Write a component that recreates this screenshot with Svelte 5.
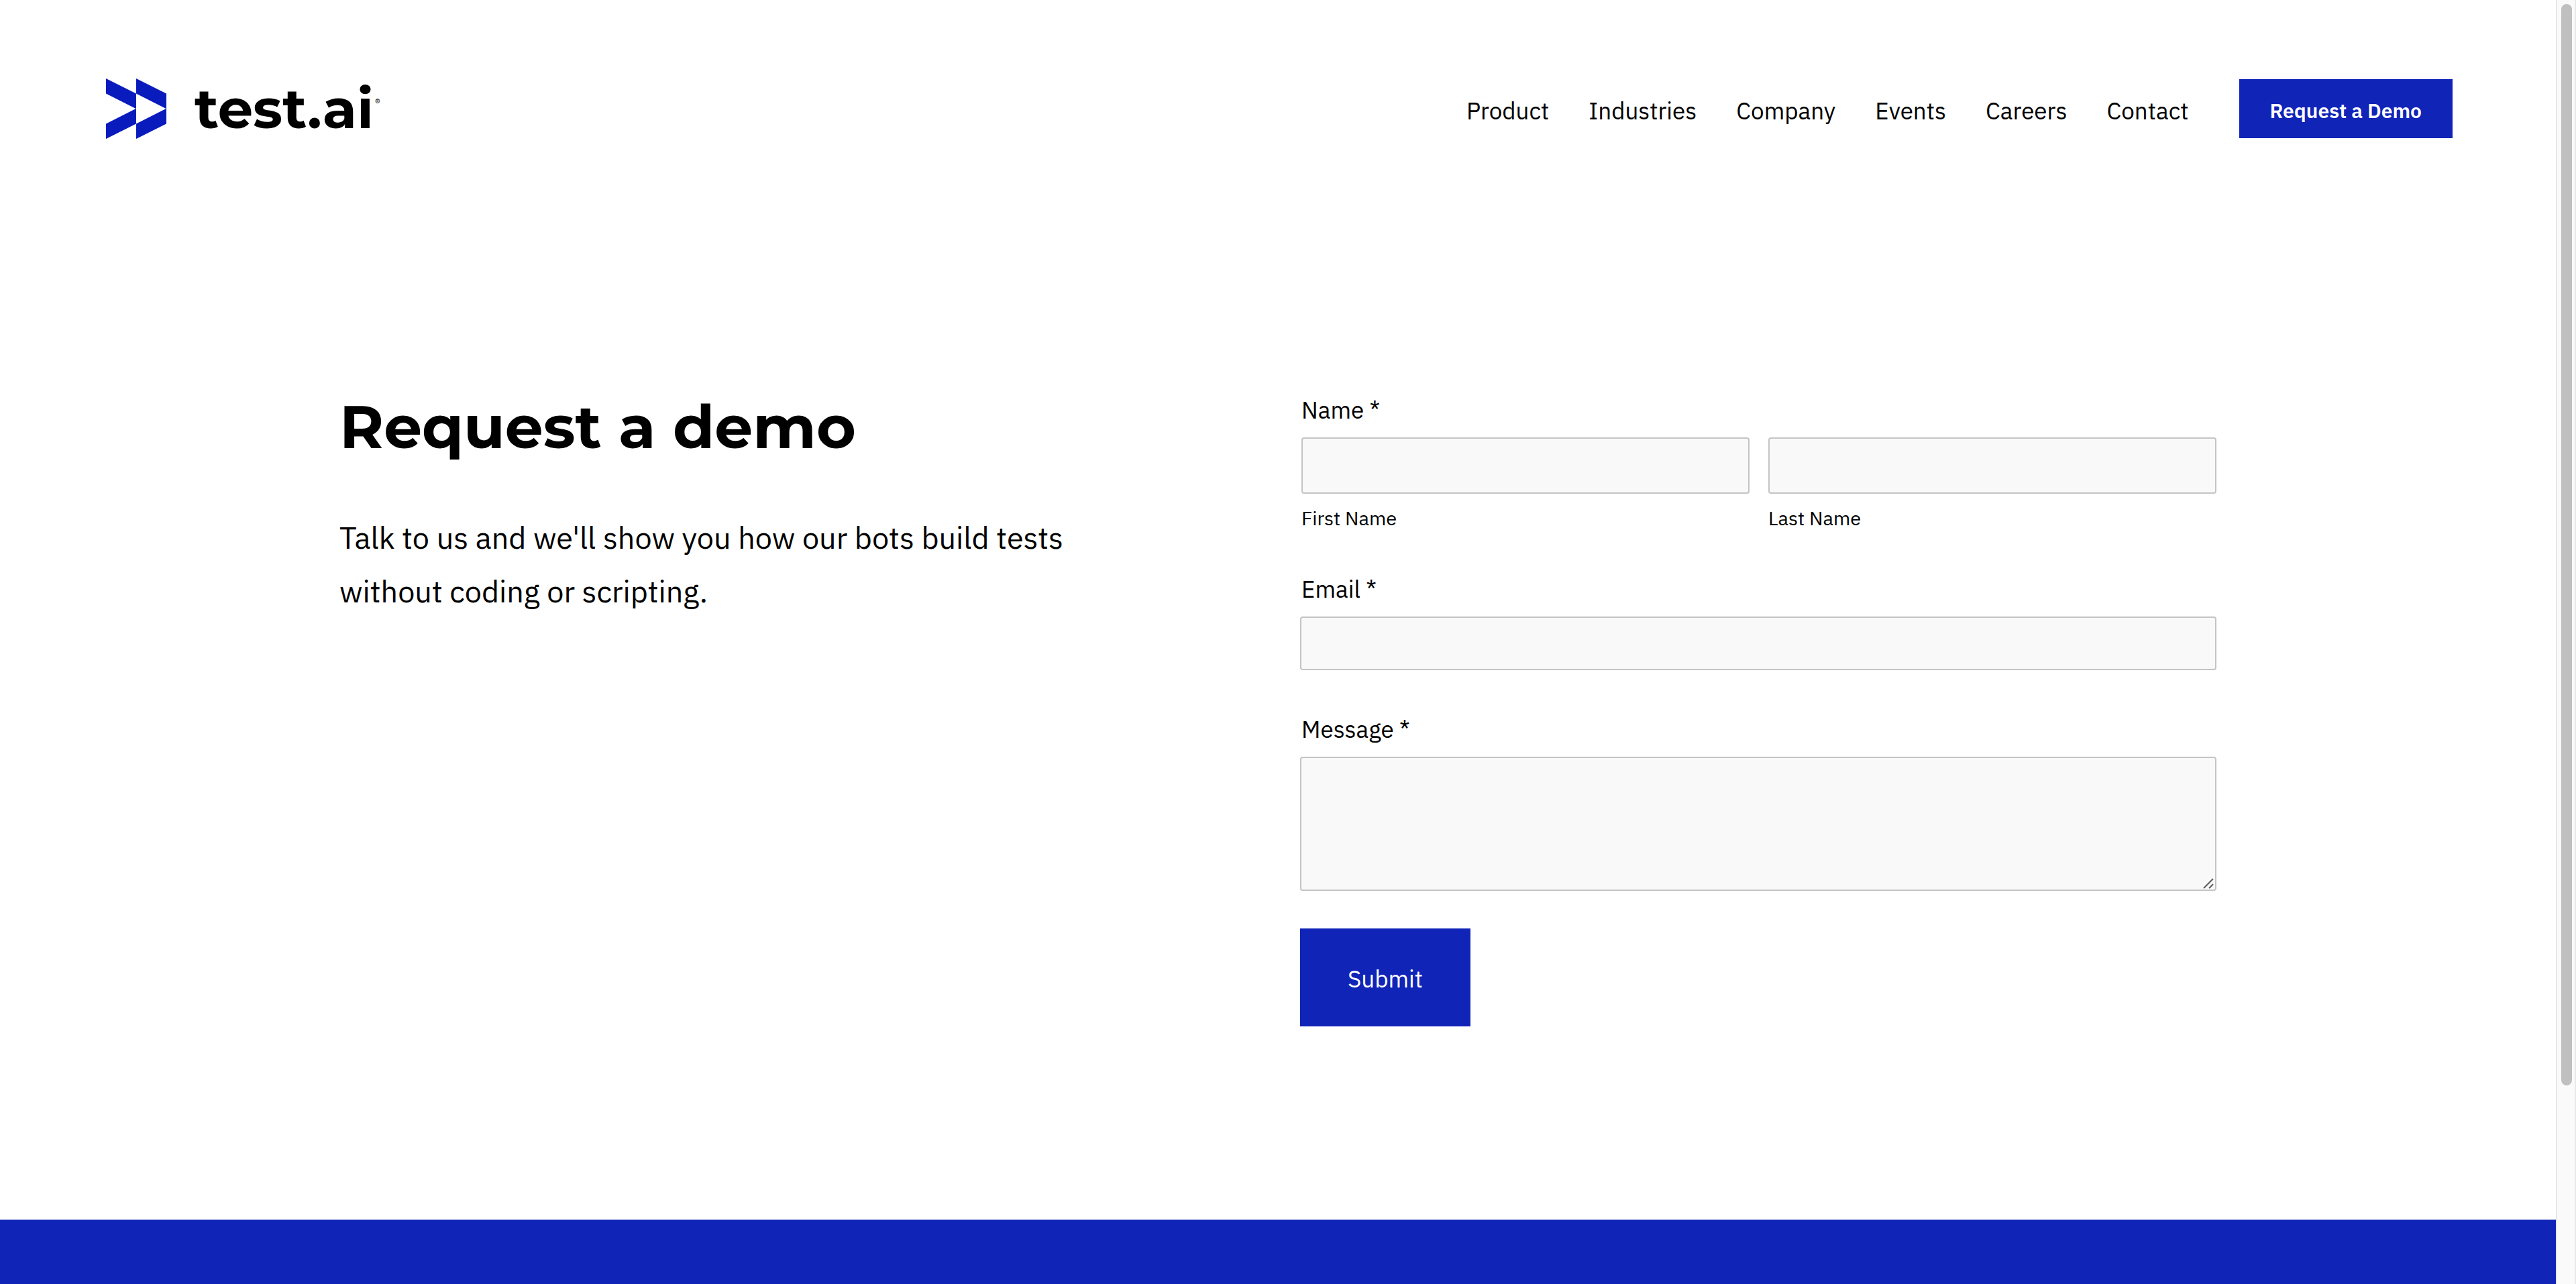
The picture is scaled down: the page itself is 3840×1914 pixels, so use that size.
<script>
  const links = ['Product', 'Industries', 'Company', 'Events', 'Careers', 'Contact'];
</script>

<div class="shell">
  <div class="page">
    <header>
      <a class="logo" href="#home" aria-label="test.ai home">
        <svg viewBox="0 0 90 90" aria-hidden="true">
          <path d="M0 0 45 22.5V67.5L0 90V67.5L44.5 45 0 22.5Z" />
          <path d="M45 0 90 22.5V67.5L45 90V67.5L89.5 45 45 22.5Z" />
        </svg>
        <span class="wordmark">test.ai</span>
        <span class="mark">®</span>
      </a>
      <nav>
        {#each links as link}
          <a href="#{link.toLowerCase()}">{link}</a>
        {/each}
      </nav>
      <a class="cta" href="#demo">Request a Demo</a>
    </header>

    <main id="demo">
      <section class="intro">
        <h1>Request a demo</h1>
        <p>Talk to us and we'll show you how our bots build tests without coding or scripting.</p>
      </section>

      <form onsubmit={(e) => e.preventDefault()}>
        <fieldset>
          <legend>Name *</legend>
          <div class="names">
            <div class="name">
              <input id="first" type="text" required />
              <label class="caption" for="first">First Name</label>
            </div>
            <div class="name">
              <input id="last" type="text" required />
              <label class="caption" for="last">Last Name</label>
            </div>
          </div>
        </fieldset>
        <div class="field">
          <label for="email">Email *</label>
          <input id="email" type="email" required />
        </div>
        <div class="field">
          <label for="message">Message *</label>
          <div class="area">
            <textarea id="message" required></textarea>
            <svg class="grip" viewBox="0 0 16 16" aria-hidden="true">
              <path d="M1 15 15 1M9 15 15 9" />
            </svg>
          </div>
        </div>
        <button type="submit">Submit</button>
      </form>
    </main>

    <footer></footer>
  </div>
  <div class="scrollbar" aria-hidden="true"><div class="thumb"></div></div>
</div>

<style>
  :global(body) {
    background: #fff;
  }
  .shell {
    --blue: #1024b8;
    display: flex;
    min-height: 100vh;
    color: #000;
    font-family: "IBM Plex Sans", Roboto, "Liberation Sans", sans-serif;
    font-size: 35px;
    line-height: 44px;
  }
  .shell * {
    box-sizing: border-box;
  }
  .page {
    flex: 1;
    min-width: 0;
    display: flex;
    flex-direction: column;
  }
  a {
    color: inherit;
    text-decoration: none;
  }

  header {
    display: flex;
    align-items: center;
    padding: 117px 154px 0 158px;
  }
  .logo {
    display: flex;
    align-items: center;
    margin-right: auto;
  }
  .logo svg {
    width: 90px;
    height: 90px;
    margin-right: 42px;
    fill: #0a1bbd;
  }
  .wordmark {
    font-family: Montserrat, Inter, sans-serif;
    font-size: 83px;
    font-weight: 700;
    line-height: 90px;
  }
  .mark {
    align-self: flex-start;
    padding: 26px 0 0 2px;
    font-size: 16px;
    line-height: 20px;
  }
  nav {
    display: flex;
    gap: 59px;
    margin-right: 75px;
    padding-top: 6px;
  }
  .cta {
    padding: 25px 46px 19px;
    background: var(--blue);
    color: #fff;
    font-size: 30px;
    font-weight: 600;
  }

  main {
    display: grid;
    grid-template-columns: 1fr 1fr;
    gap: 66px;
    width: 100%;
    max-width: 2798px;
    margin: 0 auto;
    padding: 375px 0 288px;
  }
  h1 {
    margin: 0 0 71px;
    font-family: Montserrat, Inter, sans-serif;
    font-size: 90px;
    font-weight: 700;
    line-height: 108px;
  }
  p {
    max-width: 1140px;
    margin: 0;
    font-size: 45px;
    line-height: 80px;
  }

  form {
    display: flex;
    flex-direction: column;
    padding-top: 7px;
  }
  fieldset {
    min-width: 0;
    margin: 0;
    padding: 0 0 0 2px;
    border: 0;
  }
  legend {
    padding: 0;
  }
  .names {
    display: grid;
    grid-template-columns: 1fr 1fr;
    gap: 28px;
    padding-top: 19px;
  }
  .name,
  .field {
    display: flex;
    flex-direction: column;
    gap: 19px;
  }
  .field {
    margin-top: 66px;
  }
  .field label {
    padding-left: 2px;
  }
  .field .area {
    position: relative;
    display: flex;
  }
  .name .caption {
    font-size: 29px;
    line-height: 35px;
  }
  input,
  textarea {
    display: block;
    width: 100%;
    height: 80px;
    margin: 0;
    padding: 16px 24px;
    border: 2px solid #c4c4c4;
    border-radius: 4px;
    background: #f9f9f9;
    font: inherit;
  }
  .name input {
    height: 84px;
  }
  textarea {
    height: 200px;
    resize: none;
  }
  .grip {
    position: absolute;
    right: 4px;
    bottom: 3px;
    width: 16px;
    height: 16px;
    fill: none;
    stroke: #5c5c5c;
    stroke-width: 2;
  }
  button {
    align-self: flex-start;
    margin-top: 56px;
    padding: 53px 71px 49px;
    border: 0;
    background: var(--blue);
    color: #fff;
    font: inherit;
  }

  footer {
    flex: 1;
    min-height: 96px;
    background: var(--blue);
  }

  .scrollbar {
    width: 30px;
    padding: 6px 4px 0 6px;
    border: solid #e8e8e8;
    border-width: 0 2px;
    background: #fafafa;
  }
  .thumb {
    width: 16px;
    height: 1612px;
    border-radius: 8px;
    background: #c0c0c0;
  }
</style>
